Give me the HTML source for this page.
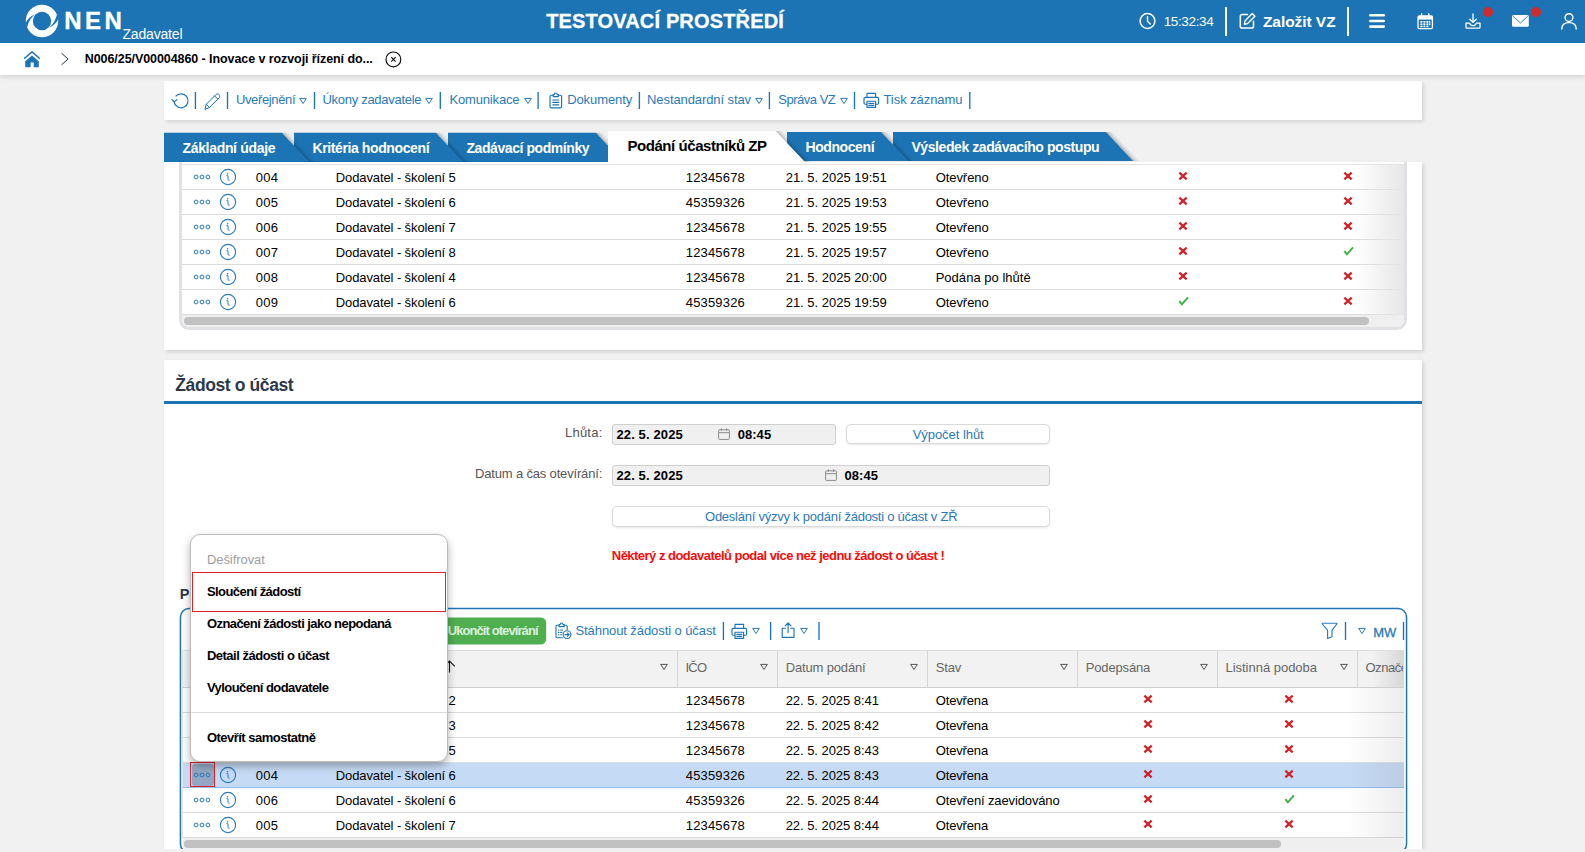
<!DOCTYPE html>
<html lang="cs"><head><meta charset="utf-8"><title>NEN - Zadavatel</title>
<style>
html,body{margin:0;padding:0}
body{width:1585px;height:852px;overflow:hidden;position:relative;background:#f1f1f1;font-family:"Liberation Sans", sans-serif;}
.t{position:absolute;white-space:pre;}
svg{overflow:visible}
</style></head><body>
<div style="position:absolute;left:0px;top:0px;width:1585px;height:43px;background:#1c74b4;"></div><svg style="position:absolute;left:0px;top:0px;" width="90" height="43" viewBox="0 0 90 43"><circle cx="42" cy="21" r="16.2" fill="#fff"/><circle cx="42" cy="21" r="9.2" fill="#1c74b4"/><path d="M25.30 23.80C27.20 19.20 30.60 15.90 35.40 14.30C31.60 16.90 28.40 21.20 26.90 28.60Z" fill="#1c74b4"/><path d="M58.70 18.20C56.80 22.80 53.40 26.10 48.60 27.70C52.40 25.10 55.60 20.80 57.10 13.40Z" fill="#1c74b4"/></svg><span class="t" style="left:64.24px;top:7px;font-size:24px;line-height:27px;color:#fff;font-weight:700;letter-spacing:3.424px;-webkit-text-stroke:0.35px #fff;">NEN</span><span class="t" style="left:122.44px;top:26px;font-size:14px;line-height:16px;color:#fff;letter-spacing:-0.171px;">Zadavatel</span><span class="t" style="left:546.20px;top:10px;font-size:20px;line-height:22px;color:#fff;font-weight:700;letter-spacing:0.153px;-webkit-text-stroke:0.3px #fff;">TESTOVACÍ PROSTŘEDÍ</span><svg style="position:absolute;left:1136px;top:9px;" width="24" height="24" viewBox="0 0 24 24"><circle cx="11.5" cy="12" r="7.4" fill="none" stroke="#fff" stroke-width="1.5"/><path d="M11.5 7.6V12.3L14.3 15" fill="none" stroke="#fff" stroke-width="1.4" stroke-linecap="round" stroke-linejoin="round"/></svg><span class="t" style="left:1163.66px;top:14px;font-size:13.5px;line-height:15px;color:#fff;letter-spacing:-0.355px;">15:32:34</span><div style="position:absolute;left:1225px;top:7px;width:2px;height:29px;background:#fff;"></div><svg style="position:absolute;left:1238px;top:11px;" width="20" height="20" viewBox="0 0 20 20"><path d="M9.5 3.5H4.2C3 3.5 2.3 4.2 2.3 5.4V15.2C2.3 16.4 3 17.1 4.2 17.1H13.6C14.8 17.1 15.5 16.4 15.5 15.2V10.2" fill="none" stroke="#fff" stroke-width="1.5" stroke-linecap="round"/><path d="M14.2 2.6L16.9 5.3L9.6 12.6L6.4 13.2L7 10Z" fill="none" stroke="#fff" stroke-width="1.4" stroke-linejoin="round"/></svg><span class="t" style="left:1262.98px;top:12.5px;font-size:15.5px;line-height:17px;color:#fff;font-weight:700;letter-spacing:-0.063px;">Založit VZ</span><div style="position:absolute;left:1347px;top:7px;width:2px;height:29px;background:#fff;"></div><svg style="position:absolute;left:1369px;top:13px;" width="16" height="16" viewBox="0 0 16 16"><rect x="0" y="1" width="16" height="2.6" rx="1.3" fill="#fff"/><rect x="0" y="6.7" width="16" height="2.6" rx="1.3" fill="#fff"/><rect x="0" y="12.3" width="16" height="2.6" rx="1.3" fill="#fff"/></svg><svg style="position:absolute;left:1417px;top:13px;" width="17" height="17" viewBox="0 0 17 17"><rect x="1" y="3" width="14.4" height="12.6" rx="1.3" fill="none" stroke="#fff" stroke-width="1.3"/><rect x="1" y="3" width="14.4" height="3.6" fill="#fff"/><path d="M4.6 0.6V4M11.8 0.6V4" stroke="#fff" stroke-width="1.3" stroke-linecap="round"/><g fill="#fff"><rect x="3.4" y="8" width="2" height="1.7"/><rect x="6.4" y="8" width="2" height="1.7"/><rect x="9.4" y="8" width="2" height="1.7"/><rect x="11.9" y="8" width="1.4" height="1.7"/><rect x="3.4" y="10.4" width="2" height="1.7"/><rect x="6.4" y="10.4" width="2" height="1.7"/><rect x="9.4" y="10.4" width="2" height="1.7"/><rect x="11.9" y="10.4" width="1.4" height="1.7"/><rect x="3.4" y="12.7" width="2" height="1.5"/><rect x="6.4" y="12.7" width="2" height="1.5"/><rect x="9.4" y="12.7" width="2" height="1.5"/></g></svg><svg style="position:absolute;left:1465px;top:13px;" width="16" height="17" viewBox="0 0 16 17"><path d="M8 0.8V9.2M4.8 6.2L8 9.4L11.2 6.2" fill="none" stroke="#fff" stroke-width="1.3" stroke-linecap="round" stroke-linejoin="round"/><path d="M1 10.2H4.6C5 11.8 6.3 12.6 8 12.6C9.7 12.6 11 11.8 11.4 10.2H15V14.2C15 14.8 14.6 15.2 14 15.2H2C1.4 15.2 1 14.8 1 14.2Z" fill="none" stroke="#fff" stroke-width="1.3" stroke-linejoin="round"/></svg><div style="position:absolute;left:1483px;top:7px;width:10px;height:10px;background:#cf2a2d;border-radius:50%;"></div><svg style="position:absolute;left:1512px;top:15px;" width="17" height="12" viewBox="0 0 17 12"><rect x="0" y="0" width="16.8" height="11.8" rx="1.6" fill="#fff"/><path d="M1 1.2L8.4 8L15.8 1.2" fill="none" stroke="#1c74b4" stroke-width="0.9"/></svg><div style="position:absolute;left:1531px;top:7px;width:10px;height:10px;background:#cf2a2d;border-radius:50%;"></div><svg style="position:absolute;left:1561px;top:13px;" width="16" height="17" viewBox="0 0 16 17"><circle cx="8" cy="4.6" r="3.9" fill="none" stroke="#fff" stroke-width="1.4"/><path d="M0.8 16C0.8 11.6 4 9.6 8 9.6C12 9.6 15.2 11.6 15.2 16" fill="none" stroke="#fff" stroke-width="1.4" stroke-linecap="round"/></svg><div style="position:absolute;left:0px;top:43px;width:1585px;height:32px;background:#fff;box-shadow:0 2px 5px rgba(0,0,0,.13);"></div><svg style="position:absolute;left:24px;top:50.5px;" width="16" height="17" viewBox="0 0 16 17"><path d="M0.6 7.2L8 0.9L15.4 7.2" fill="none" stroke="#1c74b4" stroke-width="1.5" stroke-linecap="round" stroke-linejoin="round"/><path d="M8 4.6L14.8 10.2V15.4C14.8 16 14.4 16.3 13.9 16.3H9.7V11.4H6.6V16.3H2.1C1.6 16.3 1.2 16 1.2 15.4V10.2Z" fill="#1c74b4"/></svg><svg style="position:absolute;left:60px;top:52px;" width="10" height="14" viewBox="0 0 10 14"><path d="M1.6 1.2L8 7L1.6 12.8" fill="none" stroke="#1f3550" stroke-width="1"/></svg><span class="t" style="left:84.80px;top:52px;font-size:12.5px;line-height:14px;color:#000;font-weight:700;letter-spacing:-0.078px;">N006/25/V00004860 - Inovace v rozvoji řízení do...</span><svg style="position:absolute;left:385px;top:50.5px;" width="17" height="17" viewBox="0 0 17 17"><circle cx="8.4" cy="8.4" r="7.4" fill="none" stroke="#111" stroke-width="1.2"/><path d="M6.2 6.2L10.6 10.6M10.6 6.2L6.2 10.6" stroke="#111" stroke-width="1.15"/></svg><div style="position:absolute;left:164px;top:81px;width:1258px;height:39px;background:#fff;box-shadow:1.5px 1.5px 4px rgba(0,0,0,.12);"></div><svg style="position:absolute;left:171px;top:91px;" width="20" height="20" viewBox="0 0 20 20"><path d="M4.6 5.4A7 7 0 1 1 3.1 10.6" fill="none" stroke="#1c74b4" stroke-width="1.2"/><path d="M0.9 8.4L3.2 10.9L6 8.6" fill="none" stroke="#1c74b4" stroke-width="1.2" stroke-linejoin="round" stroke-linecap="round"/></svg><svg style="position:absolute;left:193px;top:92px;" width="5" height="17" viewBox="0 0 5 17"><path d="M2.40 0V17" stroke="#1c74b4" stroke-width="1.35"/></svg><svg style="position:absolute;left:203.6px;top:92.6px;" width="17" height="17" viewBox="0 0 17 17"><g fill="none" stroke="#1c74b4" stroke-width="1.0" stroke-linejoin="round" stroke-linecap="round"><path d="M1 16L2.3 11.2L11.9 1.6C12.8 0.7 14.2 0.7 15.1 1.6C16 2.5 16 3.9 15.1 4.8L5.5 14.4Z"/><path d="M2.3 11.2L5.5 14.4"/><path d="M10.6 2.9L13.8 6.1"/></g></svg><svg style="position:absolute;left:225px;top:92px;" width="5" height="17" viewBox="0 0 5 17"><path d="M2.50 0V17" stroke="#1c74b4" stroke-width="1.35"/></svg><span class="t" style="left:235.98px;top:92px;font-size:13px;line-height:15px;color:#2a7ab9;letter-spacing:-0.371px;">Uveřejnění</span><svg style="position:absolute;left:298.2px;top:96px;" width="10" height="10" viewBox="0 0 10 10"><path d="M1.65 2.4H8.35L5 7.5Z" fill="none" stroke="#1c74b4" stroke-width="0.95" stroke-linejoin="round"/></svg><svg style="position:absolute;left:312px;top:92px;" width="5" height="17" viewBox="0 0 5 17"><path d="M2.50 0V17" stroke="#1c74b4" stroke-width="1.35"/></svg><span class="t" style="left:322.48px;top:92px;font-size:13px;line-height:15px;color:#2a7ab9;letter-spacing:-0.287px;">Úkony zadavatele</span><svg style="position:absolute;left:424px;top:96px;" width="10" height="10" viewBox="0 0 10 10"><path d="M1.65 2.4H8.35L5 7.5Z" fill="none" stroke="#1c74b4" stroke-width="0.95" stroke-linejoin="round"/></svg><svg style="position:absolute;left:438px;top:92px;" width="5" height="17" viewBox="0 0 5 17"><path d="M2.30 0V17" stroke="#1c74b4" stroke-width="1.35"/></svg><span class="t" style="left:449.48px;top:92px;font-size:13px;line-height:15px;color:#2a7ab9;letter-spacing:-0.167px;">Komunikace</span><svg style="position:absolute;left:523px;top:96px;" width="10" height="10" viewBox="0 0 10 10"><path d="M1.65 2.4H8.35L5 7.5Z" fill="none" stroke="#1c74b4" stroke-width="0.95" stroke-linejoin="round"/></svg><svg style="position:absolute;left:536px;top:92px;" width="5" height="17" viewBox="0 0 5 17"><path d="M2.10 0V17" stroke="#1c74b4" stroke-width="1.35"/></svg><svg style="position:absolute;left:548.6px;top:92.2px;" width="14" height="17" viewBox="0 0 14 17"><g fill="none" stroke="#1c74b4" stroke-width="1.15" stroke-linejoin="round" stroke-linecap="round"><path d="M4.2 3.2H2.2C1.5 3.2 1 3.7 1 4.4V14.6C1 15.3 1.5 15.8 2.2 15.8H11.4C12.1 15.8 12.6 15.3 12.6 14.6V4.4C12.6 3.7 12.1 3.2 11.4 3.2H9.4"/><path d="M4.2 4.6V2.6H5.4C5.4 1.6 6 1 6.8 1C7.6 1 8.2 1.6 8.2 2.6H9.4V4.6Z"/><path d="M3.8 8H9.8M3.8 10.4H9.8M3.8 12.8H9.8"/></g></svg><span class="t" style="left:567.18px;top:92px;font-size:13px;line-height:15px;color:#2a7ab9;letter-spacing:-0.089px;">Dokumenty</span><svg style="position:absolute;left:637px;top:92px;" width="5" height="17" viewBox="0 0 5 17"><path d="M2.40 0V17" stroke="#1c74b4" stroke-width="1.35"/></svg><span class="t" style="left:647.08px;top:92px;font-size:13px;line-height:15px;color:#2a7ab9;letter-spacing:-0.092px;">Nestandardní stav</span><svg style="position:absolute;left:754px;top:96px;" width="10" height="10" viewBox="0 0 10 10"><path d="M1.65 2.4H8.35L5 7.5Z" fill="none" stroke="#1c74b4" stroke-width="0.95" stroke-linejoin="round"/></svg><svg style="position:absolute;left:767px;top:92px;" width="5" height="17" viewBox="0 0 5 17"><path d="M2.40 0V17" stroke="#1c74b4" stroke-width="1.35"/></svg><span class="t" style="left:778.28px;top:92px;font-size:13px;line-height:15px;color:#2a7ab9;letter-spacing:-0.485px;">Správa VZ</span><svg style="position:absolute;left:838.5px;top:96px;" width="10" height="10" viewBox="0 0 10 10"><path d="M1.65 2.4H8.35L5 7.5Z" fill="none" stroke="#1c74b4" stroke-width="0.95" stroke-linejoin="round"/></svg><svg style="position:absolute;left:852px;top:92px;" width="5" height="17" viewBox="0 0 5 17"><path d="M2.50 0V17" stroke="#1c74b4" stroke-width="1.35"/></svg><svg style="position:absolute;left:863px;top:92.4px;" width="17" height="17" viewBox="0 0 17 17"><g fill="none" stroke="#1c74b4" stroke-width="1.15" stroke-linejoin="round" stroke-linecap="round"><path d="M4 5.4V1.4H12.6V5.4"/><path d="M4 12.2H2.2C1.5 12.2 1 11.7 1 11V6.6C1 5.9 1.5 5.4 2.2 5.4H14.4C15.1 5.4 15.6 5.9 15.6 6.6V11C15.6 11.7 15.1 12.2 14.4 12.2H12.6"/><path d="M4 9.2H12.6V15.4H4Z"/><path d="M5.8 11.4H10.8M5.8 13.3H10.8"/></g></svg><span class="t" style="left:883.48px;top:92px;font-size:13px;line-height:15px;color:#2a7ab9;letter-spacing:-0.062px;">Tisk záznamu</span><svg style="position:absolute;left:967px;top:92px;" width="5" height="17" viewBox="0 0 5 17"><path d="M2.80 0V17" stroke="#1c74b4" stroke-width="1.35"/></svg><svg style="position:absolute;left:160px;top:126px;" width="1000" height="36" viewBox="0 0 1000 36"><linearGradient id="g5" gradientUnits="userSpaceOnUse" x1="946.00" y1="5.90" x2="949.75" y2="2.41"><stop offset="0" stop-color="#000" stop-opacity=".24"/><stop offset=".5" stop-color="#000" stop-opacity=".09"/><stop offset="1" stop-color="#000" stop-opacity="0"/></linearGradient><polygon points="946.00,5.90 953.00,5.90 980.13,35.00 973.13,35.00" fill="url(#g5)"/><polygon points="733.00,5.90 946.00,5.90 973.13,35.00 733.00,35.00" fill="#1c74b4"/><linearGradient id="g4" gradientUnits="userSpaceOnUse" x1="721.20" y1="5.90" x2="724.95" y2="2.41"><stop offset="0" stop-color="#000" stop-opacity=".24"/><stop offset=".5" stop-color="#000" stop-opacity=".09"/><stop offset="1" stop-color="#000" stop-opacity="0"/></linearGradient><polygon points="721.20,5.90 728.20,5.90 755.33,35.00 748.33,35.00" fill="url(#g4)"/><polygon points="627.00,5.90 721.20,5.90 748.33,35.00 627.00,35.00" fill="#1c74b4"/><linearGradient id="g2" gradientUnits="userSpaceOnUse" x1="436.00" y1="6.80" x2="439.75" y2="3.31"><stop offset="0" stop-color="#000" stop-opacity=".24"/><stop offset=".5" stop-color="#000" stop-opacity=".09"/><stop offset="1" stop-color="#000" stop-opacity="0"/></linearGradient><polygon points="436.00,6.80 443.00,6.80 470.22,36.00 463.22,36.00" fill="url(#g2)"/><polygon points="288.00,6.80 436.00,6.80 463.22,36.00 288.00,36.00" fill="#1c74b4"/><linearGradient id="g1" gradientUnits="userSpaceOnUse" x1="276.00" y1="6.80" x2="279.75" y2="3.31"><stop offset="0" stop-color="#000" stop-opacity=".24"/><stop offset=".5" stop-color="#000" stop-opacity=".09"/><stop offset="1" stop-color="#000" stop-opacity="0"/></linearGradient><polygon points="276.00,6.80 283.00,6.80 310.22,36.00 303.22,36.00" fill="url(#g1)"/><polygon points="134.00,6.80 276.00,6.80 303.22,36.00 134.00,36.00" fill="#1c74b4"/><linearGradient id="g0" gradientUnits="userSpaceOnUse" x1="122.00" y1="6.80" x2="125.75" y2="3.31"><stop offset="0" stop-color="#000" stop-opacity=".24"/><stop offset=".5" stop-color="#000" stop-opacity=".09"/><stop offset="1" stop-color="#000" stop-opacity="0"/></linearGradient><polygon points="122.00,6.80 129.00,6.80 156.22,36.00 149.22,36.00" fill="url(#g0)"/><polygon points="4.00,6.80 122.00,6.80 149.22,36.00 4.00,36.00" fill="#1c74b4"/><linearGradient id="g3" gradientUnits="userSpaceOnUse" x1="615.60" y1="5.00" x2="619.29" y2="1.50"><stop offset="0" stop-color="#000" stop-opacity=".24"/><stop offset=".5" stop-color="#000" stop-opacity=".09"/><stop offset="1" stop-color="#000" stop-opacity="0"/></linearGradient><polygon points="615.60,5.00 622.60,5.00 652.00,36.00 645.00,36.00" fill="url(#g3)"/><polygon points="448.00,5.00 615.60,5.00 645.00,36.00 448.00,36.00" fill="#fff"/></svg><span class="t" style="left:182.44px;top:140px;font-size:14px;line-height:16px;color:#fff;font-weight:700;letter-spacing:-0.318px;">Základní údaje</span><span class="t" style="left:312.44px;top:140px;font-size:14px;line-height:16px;color:#fff;font-weight:700;letter-spacing:-0.386px;">Kritéria hodnocení</span><span class="t" style="left:466.44px;top:140px;font-size:14px;line-height:16px;color:#fff;font-weight:700;letter-spacing:-0.426px;">Zadávací podmínky</span><span class="t" style="left:627.40px;top:136.5px;font-size:15px;line-height:17px;color:#000;font-weight:700;letter-spacing:-0.435px;">Podání účastníků ZP</span><span class="t" style="left:805.44px;top:139.3px;font-size:14px;line-height:16px;color:#fff;font-weight:700;letter-spacing:-0.403px;">Hodnocení</span><span class="t" style="left:911.44px;top:139.3px;font-size:14px;line-height:16px;color:#fff;font-weight:700;letter-spacing:-0.425px;">Výsledek zadávacího postupu</span><div style="position:absolute;left:164px;top:162px;width:1258px;height:188px;background:#fff;box-shadow:2px 2px 4px rgba(0,0,0,.13);"></div><div style="position:absolute;left:179px;top:162px;width:1222px;height:165px;border:3px solid #dfe1e4;border-top:none;border-radius:0 0 10px 10px;background:#fff;"></div><div style="position:absolute;left:182px;top:164px;width:1222px;height:1px;background:#e4e4e4;"></div><div style="position:absolute;left:182px;top:189px;width:1222px;height:1px;background:#dcdcdc;"></div><svg style="position:absolute;left:192px;top:172.7px;" width="20" height="8" viewBox="0 0 20 8"><circle cx="4.1" cy="4" r="1.9" fill="none" stroke="#2a7ab9" stroke-width="1"/><circle cx="10" cy="4" r="1.9" fill="none" stroke="#2a7ab9" stroke-width="1"/><circle cx="15.9" cy="4" r="1.9" fill="none" stroke="#2a7ab9" stroke-width="1"/></svg><svg style="position:absolute;left:219.2px;top:167.7px;" width="18" height="18" viewBox="0 0 18 18"><circle cx="9" cy="9" r="7.6" fill="none" stroke="#2a7ab9" stroke-width="1.15"/><circle cx="8.6" cy="5.8" r="0.8" fill="#2a7ab9"/><path d="M7.8 7.7H9V11.5C9 12.1 9.5 12.35 10.3 12.2" fill="none" stroke="#2a7ab9" stroke-width="0.95" stroke-linecap="round" stroke-linejoin="round"/></svg><span class="t" style="left:255.78px;top:170px;font-size:13px;line-height:15px;color:#000;letter-spacing:0.318px;">004</span><span class="t" style="left:335.78px;top:170px;font-size:13px;line-height:15px;color:#000;letter-spacing:-0.104px;">Dodavatel - školení 5</span><span class="t" style="left:685.78px;top:170px;font-size:13px;line-height:15px;color:#000;letter-spacing:0.171px;">12345678</span><span class="t" style="left:785.68px;top:170px;font-size:13px;line-height:15px;color:#000;letter-spacing:-0.010px;">21. 5. 2025 19:51</span><span class="t" style="left:935.68px;top:170px;font-size:13px;line-height:15px;color:#000;letter-spacing:-0.063px;">Otevřeno</span><svg style="position:absolute;left:1177.3px;top:170.1px;" width="12" height="12" viewBox="0 0 12 12"><path d="M2.35 2.65L9.65 9.35M9.65 2.65L2.35 9.35" stroke="#cf2128" stroke-width="2.2"/></svg><svg style="position:absolute;left:1342.4px;top:170.1px;" width="12" height="12" viewBox="0 0 12 12"><path d="M2.35 2.65L9.65 9.35M9.65 2.65L2.35 9.35" stroke="#cf2128" stroke-width="2.2"/></svg><div style="position:absolute;left:182px;top:214px;width:1222px;height:1px;background:#dcdcdc;"></div><svg style="position:absolute;left:192px;top:197.7px;" width="20" height="8" viewBox="0 0 20 8"><circle cx="4.1" cy="4" r="1.9" fill="none" stroke="#2a7ab9" stroke-width="1"/><circle cx="10" cy="4" r="1.9" fill="none" stroke="#2a7ab9" stroke-width="1"/><circle cx="15.9" cy="4" r="1.9" fill="none" stroke="#2a7ab9" stroke-width="1"/></svg><svg style="position:absolute;left:219.2px;top:192.7px;" width="18" height="18" viewBox="0 0 18 18"><circle cx="9" cy="9" r="7.6" fill="none" stroke="#2a7ab9" stroke-width="1.15"/><circle cx="8.6" cy="5.8" r="0.8" fill="#2a7ab9"/><path d="M7.8 7.7H9V11.5C9 12.1 9.5 12.35 10.3 12.2" fill="none" stroke="#2a7ab9" stroke-width="0.95" stroke-linecap="round" stroke-linejoin="round"/></svg><span class="t" style="left:255.78px;top:195px;font-size:13px;line-height:15px;color:#000;letter-spacing:0.318px;">005</span><span class="t" style="left:335.78px;top:195px;font-size:13px;line-height:15px;color:#000;letter-spacing:-0.104px;">Dodavatel - školení 6</span><span class="t" style="left:685.78px;top:195px;font-size:13px;line-height:15px;color:#000;letter-spacing:0.171px;">45359326</span><span class="t" style="left:785.68px;top:195px;font-size:13px;line-height:15px;color:#000;letter-spacing:-0.010px;">21. 5. 2025 19:53</span><span class="t" style="left:935.68px;top:195px;font-size:13px;line-height:15px;color:#000;letter-spacing:-0.063px;">Otevřeno</span><svg style="position:absolute;left:1177.3px;top:195.1px;" width="12" height="12" viewBox="0 0 12 12"><path d="M2.35 2.65L9.65 9.35M9.65 2.65L2.35 9.35" stroke="#cf2128" stroke-width="2.2"/></svg><svg style="position:absolute;left:1342.4px;top:195.1px;" width="12" height="12" viewBox="0 0 12 12"><path d="M2.35 2.65L9.65 9.35M9.65 2.65L2.35 9.35" stroke="#cf2128" stroke-width="2.2"/></svg><div style="position:absolute;left:182px;top:239px;width:1222px;height:1px;background:#dcdcdc;"></div><svg style="position:absolute;left:192px;top:222.7px;" width="20" height="8" viewBox="0 0 20 8"><circle cx="4.1" cy="4" r="1.9" fill="none" stroke="#2a7ab9" stroke-width="1"/><circle cx="10" cy="4" r="1.9" fill="none" stroke="#2a7ab9" stroke-width="1"/><circle cx="15.9" cy="4" r="1.9" fill="none" stroke="#2a7ab9" stroke-width="1"/></svg><svg style="position:absolute;left:219.2px;top:217.7px;" width="18" height="18" viewBox="0 0 18 18"><circle cx="9" cy="9" r="7.6" fill="none" stroke="#2a7ab9" stroke-width="1.15"/><circle cx="8.6" cy="5.8" r="0.8" fill="#2a7ab9"/><path d="M7.8 7.7H9V11.5C9 12.1 9.5 12.35 10.3 12.2" fill="none" stroke="#2a7ab9" stroke-width="0.95" stroke-linecap="round" stroke-linejoin="round"/></svg><span class="t" style="left:255.78px;top:220px;font-size:13px;line-height:15px;color:#000;letter-spacing:0.318px;">006</span><span class="t" style="left:335.78px;top:220px;font-size:13px;line-height:15px;color:#000;letter-spacing:-0.104px;">Dodavatel - školení 7</span><span class="t" style="left:685.78px;top:220px;font-size:13px;line-height:15px;color:#000;letter-spacing:0.171px;">12345678</span><span class="t" style="left:785.68px;top:220px;font-size:13px;line-height:15px;color:#000;letter-spacing:-0.010px;">21. 5. 2025 19:55</span><span class="t" style="left:935.68px;top:220px;font-size:13px;line-height:15px;color:#000;letter-spacing:-0.063px;">Otevřeno</span><svg style="position:absolute;left:1177.3px;top:220.1px;" width="12" height="12" viewBox="0 0 12 12"><path d="M2.35 2.65L9.65 9.35M9.65 2.65L2.35 9.35" stroke="#cf2128" stroke-width="2.2"/></svg><svg style="position:absolute;left:1342.4px;top:220.1px;" width="12" height="12" viewBox="0 0 12 12"><path d="M2.35 2.65L9.65 9.35M9.65 2.65L2.35 9.35" stroke="#cf2128" stroke-width="2.2"/></svg><div style="position:absolute;left:182px;top:264px;width:1222px;height:1px;background:#dcdcdc;"></div><svg style="position:absolute;left:192px;top:247.7px;" width="20" height="8" viewBox="0 0 20 8"><circle cx="4.1" cy="4" r="1.9" fill="none" stroke="#2a7ab9" stroke-width="1"/><circle cx="10" cy="4" r="1.9" fill="none" stroke="#2a7ab9" stroke-width="1"/><circle cx="15.9" cy="4" r="1.9" fill="none" stroke="#2a7ab9" stroke-width="1"/></svg><svg style="position:absolute;left:219.2px;top:242.7px;" width="18" height="18" viewBox="0 0 18 18"><circle cx="9" cy="9" r="7.6" fill="none" stroke="#2a7ab9" stroke-width="1.15"/><circle cx="8.6" cy="5.8" r="0.8" fill="#2a7ab9"/><path d="M7.8 7.7H9V11.5C9 12.1 9.5 12.35 10.3 12.2" fill="none" stroke="#2a7ab9" stroke-width="0.95" stroke-linecap="round" stroke-linejoin="round"/></svg><span class="t" style="left:255.78px;top:245px;font-size:13px;line-height:15px;color:#000;letter-spacing:0.318px;">007</span><span class="t" style="left:335.78px;top:245px;font-size:13px;line-height:15px;color:#000;letter-spacing:-0.104px;">Dodavatel - školení 8</span><span class="t" style="left:685.78px;top:245px;font-size:13px;line-height:15px;color:#000;letter-spacing:0.171px;">12345678</span><span class="t" style="left:785.68px;top:245px;font-size:13px;line-height:15px;color:#000;letter-spacing:-0.010px;">21. 5. 2025 19:57</span><span class="t" style="left:935.68px;top:245px;font-size:13px;line-height:15px;color:#000;letter-spacing:-0.063px;">Otevřeno</span><svg style="position:absolute;left:1177.3px;top:245.1px;" width="12" height="12" viewBox="0 0 12 12"><path d="M2.35 2.65L9.65 9.35M9.65 2.65L2.35 9.35" stroke="#cf2128" stroke-width="2.2"/></svg><svg style="position:absolute;left:1341.4px;top:245.1px;" width="14" height="12" viewBox="0 0 14 12"><path d="M3.3 6.1L5.9 9.3L12 2.4" fill="none" stroke="#3cb144" stroke-width="2"/></svg><div style="position:absolute;left:182px;top:289px;width:1222px;height:1px;background:#dcdcdc;"></div><svg style="position:absolute;left:192px;top:272.7px;" width="20" height="8" viewBox="0 0 20 8"><circle cx="4.1" cy="4" r="1.9" fill="none" stroke="#2a7ab9" stroke-width="1"/><circle cx="10" cy="4" r="1.9" fill="none" stroke="#2a7ab9" stroke-width="1"/><circle cx="15.9" cy="4" r="1.9" fill="none" stroke="#2a7ab9" stroke-width="1"/></svg><svg style="position:absolute;left:219.2px;top:267.7px;" width="18" height="18" viewBox="0 0 18 18"><circle cx="9" cy="9" r="7.6" fill="none" stroke="#2a7ab9" stroke-width="1.15"/><circle cx="8.6" cy="5.8" r="0.8" fill="#2a7ab9"/><path d="M7.8 7.7H9V11.5C9 12.1 9.5 12.35 10.3 12.2" fill="none" stroke="#2a7ab9" stroke-width="0.95" stroke-linecap="round" stroke-linejoin="round"/></svg><span class="t" style="left:255.78px;top:270px;font-size:13px;line-height:15px;color:#000;letter-spacing:0.318px;">008</span><span class="t" style="left:335.78px;top:270px;font-size:13px;line-height:15px;color:#000;letter-spacing:-0.104px;">Dodavatel - školení 4</span><span class="t" style="left:685.78px;top:270px;font-size:13px;line-height:15px;color:#000;letter-spacing:0.171px;">12345678</span><span class="t" style="left:785.68px;top:270px;font-size:13px;line-height:15px;color:#000;letter-spacing:-0.010px;">21. 5. 2025 20:00</span><span class="t" style="left:935.68px;top:270px;font-size:13px;line-height:15px;color:#000;letter-spacing:0.024px;">Podána po lhůtě</span><svg style="position:absolute;left:1177.3px;top:270.09999999999997px;" width="12" height="12" viewBox="0 0 12 12"><path d="M2.35 2.65L9.65 9.35M9.65 2.65L2.35 9.35" stroke="#cf2128" stroke-width="2.2"/></svg><svg style="position:absolute;left:1342.4px;top:270.09999999999997px;" width="12" height="12" viewBox="0 0 12 12"><path d="M2.35 2.65L9.65 9.35M9.65 2.65L2.35 9.35" stroke="#cf2128" stroke-width="2.2"/></svg><div style="position:absolute;left:182px;top:314px;width:1222px;height:1px;background:#dcdcdc;"></div><svg style="position:absolute;left:192px;top:297.7px;" width="20" height="8" viewBox="0 0 20 8"><circle cx="4.1" cy="4" r="1.9" fill="none" stroke="#2a7ab9" stroke-width="1"/><circle cx="10" cy="4" r="1.9" fill="none" stroke="#2a7ab9" stroke-width="1"/><circle cx="15.9" cy="4" r="1.9" fill="none" stroke="#2a7ab9" stroke-width="1"/></svg><svg style="position:absolute;left:219.2px;top:292.7px;" width="18" height="18" viewBox="0 0 18 18"><circle cx="9" cy="9" r="7.6" fill="none" stroke="#2a7ab9" stroke-width="1.15"/><circle cx="8.6" cy="5.8" r="0.8" fill="#2a7ab9"/><path d="M7.8 7.7H9V11.5C9 12.1 9.5 12.35 10.3 12.2" fill="none" stroke="#2a7ab9" stroke-width="0.95" stroke-linecap="round" stroke-linejoin="round"/></svg><span class="t" style="left:255.78px;top:295px;font-size:13px;line-height:15px;color:#000;letter-spacing:0.318px;">009</span><span class="t" style="left:335.78px;top:295px;font-size:13px;line-height:15px;color:#000;letter-spacing:-0.104px;">Dodavatel - školení 6</span><span class="t" style="left:685.78px;top:295px;font-size:13px;line-height:15px;color:#000;letter-spacing:0.171px;">45359326</span><span class="t" style="left:785.68px;top:295px;font-size:13px;line-height:15px;color:#000;letter-spacing:-0.010px;">21. 5. 2025 19:59</span><span class="t" style="left:935.68px;top:295px;font-size:13px;line-height:15px;color:#000;letter-spacing:-0.063px;">Otevřeno</span><svg style="position:absolute;left:1176.3px;top:295.09999999999997px;" width="14" height="12" viewBox="0 0 14 12"><path d="M3.3 6.1L5.9 9.3L12 2.4" fill="none" stroke="#3cb144" stroke-width="2"/></svg><svg style="position:absolute;left:1342.4px;top:295.09999999999997px;" width="12" height="12" viewBox="0 0 12 12"><path d="M2.35 2.65L9.65 9.35M9.65 2.65L2.35 9.35" stroke="#cf2128" stroke-width="2.2"/></svg><div style="position:absolute;left:1356px;top:165px;width:48px;height:150px;background:linear-gradient(90deg,rgba(232,232,232,0),rgba(230,230,230,1));"></div><div style="position:absolute;left:182px;top:315px;width:1222px;height:12px;background:#efefef;border-radius:0 0 7px 7px;"></div><div style="position:absolute;left:184px;top:317.2px;width:1185px;height:7.7px;background:#c1c1c1;border-radius:4px;"></div><div style="position:absolute;left:164px;top:360px;width:1258px;height:489px;background:#fff;box-shadow:2px 2px 4px rgba(0,0,0,.13);"></div><span class="t" style="left:175.30px;top:374.5px;font-size:17.5px;line-height:20px;color:#2b3a4a;font-weight:700;letter-spacing:-0.392px;">Žádost o účast</span><div style="position:absolute;left:164px;top:401px;width:1258px;height:3px;background:#1c74b4;"></div><span class="t" style="left:564.98px;top:425px;font-size:13px;line-height:15px;color:#555;letter-spacing:0.237px;">Lhůta:</span><span class="t" style="left:474.98px;top:466px;font-size:13px;line-height:15px;color:#555;letter-spacing:-0.164px;">Datum a čas otevírání:</span><div style="position:absolute;left:612px;top:424px;width:224px;height:21px;background:#f0f0f0;border:1px solid #cfcfcf;border-radius:3px;box-sizing:border-box;"></div><span class="t" style="left:616.48px;top:427px;font-size:13px;line-height:15px;color:#000;font-weight:700;letter-spacing:0.118px;">22. 5. 2025</span><svg style="position:absolute;left:718px;top:427.6px;" width="12" height="12" viewBox="0 0 12 12"><g fill="none" stroke="#8a8a8a" stroke-width="1"><rect x="0.6" y="1.8" width="10.8" height="9.6" rx="0.7"/><path d="M0.6 4.7H11.4M3.4 0.4V2.8M8.6 0.4V2.8"/></g></svg><span class="t" style="left:737.68px;top:427px;font-size:13px;line-height:15px;color:#000;font-weight:700;letter-spacing:0.047px;">08:45</span><div style="position:absolute;left:846px;top:424px;width:204px;height:19.6px;background:#fff;border:1px solid #dadada;border-radius:5px;box-sizing:border-box;box-shadow:0 1px 2px rgba(0,0,0,.10);"></div><span class="t" style="left:912.68px;top:427px;font-size:13px;line-height:15px;color:#2a7ab9;letter-spacing:-0.046px;">Výpočet lhůt</span><div style="position:absolute;left:612px;top:465px;width:438px;height:21px;background:#f0f0f0;border:1px solid #cfcfcf;border-radius:3px;box-sizing:border-box;"></div><span class="t" style="left:616.48px;top:468px;font-size:13px;line-height:15px;color:#000;font-weight:700;letter-spacing:0.118px;">22. 5. 2025</span><svg style="position:absolute;left:825px;top:468.6px;" width="12" height="12" viewBox="0 0 12 12"><g fill="none" stroke="#8a8a8a" stroke-width="1"><rect x="0.6" y="1.8" width="10.8" height="9.6" rx="0.7"/><path d="M0.6 4.7H11.4M3.4 0.4V2.8M8.6 0.4V2.8"/></g></svg><span class="t" style="left:844.48px;top:468px;font-size:13px;line-height:15px;color:#000;font-weight:700;letter-spacing:0.047px;">08:45</span><div style="position:absolute;left:612px;top:506px;width:438px;height:21px;background:#fff;border:1px solid #dadada;border-radius:5px;box-sizing:border-box;box-shadow:0 1px 2px rgba(0,0,0,.10);"></div><span class="t" style="left:705.03px;top:509px;font-size:13px;line-height:15px;color:#2a7ab9;letter-spacing:-0.244px;">Odeslání výzvy k podání žádosti o účast v ZŘ</span><span class="t" style="left:611.78px;top:548px;font-size:13px;line-height:15px;color:#fb0a0a;font-weight:700;letter-spacing:-0.520px;">Některý z dodavatelů podal více než jednu žádost o účast !</span><span class="t" style="left:179.80px;top:585.6px;font-size:14.5px;line-height:16px;color:#2b3a4a;font-weight:700;">Podané žádosti o účast</span><svg style="position:absolute;left:170px;top:600px;" width="1250" height="252" viewBox="0 0 1250 252"><rect x="10.45" y="8.6" width="1226.1" height="244" rx="8.5" fill="#fff" stroke="#1c74b4" stroke-width="1.5"/></svg><div style="position:absolute;left:181.2px;top:650px;width:1.6px;height:188px;background:#e3e3e3;"></div><svg style="position:absolute;left:440px;top:610px;" width="110" height="40" viewBox="0 0 110 40"><rect x="0" y="7.4" width="106.2" height="27.1" rx="5.5" fill="#4fae50"/></svg><span class="t" style="left:447.68px;top:623.3px;font-size:13px;line-height:15px;color:#dbf0db;font-weight:700;letter-spacing:-0.914px;">Ukončit otevírání</span><svg style="position:absolute;left:555.3px;top:622.4px;" width="17" height="17" viewBox="0 0 17 17"><g fill="none" stroke="#1c74b4" stroke-width="1.1" stroke-linejoin="round" stroke-linecap="round"><path d="M4 3.2H2.1C1.5 3.2 1 3.7 1 4.3V14.7C1 15.3 1.5 15.8 2.1 15.8H7.4"/><path d="M9.2 3.2H11.1C11.7 3.2 12.2 3.7 12.2 4.3V7.6"/><path d="M4 4.6V2.6H5.2C5.2 1.6 5.8 1 6.6 1C7.4 1 8 1.6 8 2.6H9.2V4.6Z"/><path d="M3.4 8H4M3.4 10.4H4M3.4 12.8H4M5.6 8H7.6M5.6 10.4H6.8M5.6 12.8H6.6"/><circle cx="12" cy="12.6" r="3.9"/><path d="M9.9 12.6H13.9M12.5 11L14.1 12.6L12.5 14.2"/></g></svg><span class="t" style="left:575.48px;top:623.3px;font-size:13px;line-height:15px;color:#2a7ab9;letter-spacing:-0.084px;">Stáhnout žádosti o účast</span><svg style="position:absolute;left:721px;top:622px;" width="5" height="18" viewBox="0 0 5 18"><path d="M2.40 0V18" stroke="#1c74b4" stroke-width="1.35"/></svg><svg style="position:absolute;left:731px;top:622.6px;" width="17" height="17" viewBox="0 0 17 17"><g fill="none" stroke="#1c74b4" stroke-width="1.15" stroke-linejoin="round" stroke-linecap="round"><path d="M4 5.4V1.4H12.6V5.4"/><path d="M4 12.2H2.2C1.5 12.2 1 11.7 1 11V6.6C1 5.9 1.5 5.4 2.2 5.4H14.4C15.1 5.4 15.6 5.9 15.6 6.6V11C15.6 11.7 15.1 12.2 14.4 12.2H12.6"/><path d="M4 9.2H12.6V15.4H4Z"/><path d="M5.8 11.4H10.8M5.8 13.3H10.8"/></g></svg><svg style="position:absolute;left:751.3px;top:626px;" width="10" height="10" viewBox="0 0 10 10"><path d="M1.65 2.4H8.35L5 7.5Z" fill="none" stroke="#1c74b4" stroke-width="0.95" stroke-linejoin="round"/></svg><svg style="position:absolute;left:768px;top:622px;" width="5" height="18" viewBox="0 0 5 18"><path d="M2.60 0V18" stroke="#1c74b4" stroke-width="1.35"/></svg><svg style="position:absolute;left:781px;top:622.2px;" width="15" height="17" viewBox="0 0 15 17"><g fill="none" stroke="#1c74b4" stroke-width="1.15" stroke-linejoin="round" stroke-linecap="round"><path d="M4.4 6.2H1.2V15.4H13V6.2H9.8"/><path d="M7.1 10.4V1M4.2 3.8L7.1 0.9L10 3.8"/></g></svg><svg style="position:absolute;left:799px;top:626px;" width="10" height="10" viewBox="0 0 10 10"><path d="M1.65 2.4H8.35L5 7.5Z" fill="none" stroke="#1c74b4" stroke-width="0.95" stroke-linejoin="round"/></svg><svg style="position:absolute;left:817px;top:622px;" width="5" height="18" viewBox="0 0 5 18"><path d="M2.00 0V18" stroke="#1c74b4" stroke-width="1.35"/></svg><svg style="position:absolute;left:1321px;top:622px;" width="18" height="18" viewBox="0 0 18 18"><path d="M1.4 2C1 1.5 1.3 1.2 2 1.2H15.2C15.9 1.2 16.2 1.5 15.8 2L11 8.4V14.7L6.6 16.5V8.4Z" fill="none" stroke="#2a7ab9" stroke-width="1.15" stroke-linejoin="round"/></svg><svg style="position:absolute;left:1343px;top:622px;" width="5" height="18" viewBox="0 0 5 18"><path d="M2.50 0V18" stroke="#1c74b4" stroke-width="1.35"/></svg><svg style="position:absolute;left:1356.5px;top:626.2px;" width="10" height="10" viewBox="0 0 10 10"><path d="M1.65 2.4H8.35L5 7.5Z" fill="none" stroke="#1c74b4" stroke-width="0.95" stroke-linejoin="round"/></svg><span class="t" style="left:1373.28px;top:625px;font-size:13px;line-height:15px;color:#2a7ab9;letter-spacing:-0.069px;-webkit-text-stroke:.3px #2a7ab9;">MW</span><svg style="position:absolute;left:1401px;top:622px;" width="5" height="18" viewBox="0 0 5 18"><path d="M2.50 0V18" stroke="#1c74b4" stroke-width="1.35"/></svg><div style="position:absolute;left:182.8px;top:650px;width:1221.3px;height:38px;background:#f2f2f2;border-top:1px solid #dedede;border-bottom:1px solid #cfcfcf;box-sizing:border-box;"></div><div style="position:absolute;left:246.0px;top:651px;width:1px;height:36px;background:#d4d4d4;"></div><svg style="position:absolute;left:227.7px;top:662.2px;" width="10" height="10" viewBox="0 0 10 10"><path d="M1.65 2.4H8.35L5 7.5Z" fill="none" stroke="#555" stroke-width="1" stroke-linejoin="round"/></svg><div style="position:absolute;left:326.0px;top:651px;width:1px;height:36px;background:#d4d4d4;"></div><svg style="position:absolute;left:307.7px;top:662.2px;" width="10" height="10" viewBox="0 0 10 10"><path d="M1.65 2.4H8.35L5 7.5Z" fill="none" stroke="#555" stroke-width="1" stroke-linejoin="round"/></svg><div style="position:absolute;left:677.0px;top:651px;width:1px;height:36px;background:#d4d4d4;"></div><svg style="position:absolute;left:658.7px;top:662.2px;" width="10" height="10" viewBox="0 0 10 10"><path d="M1.65 2.4H8.35L5 7.5Z" fill="none" stroke="#555" stroke-width="1" stroke-linejoin="round"/></svg><div style="position:absolute;left:777.0px;top:651px;width:1px;height:36px;background:#d4d4d4;"></div><svg style="position:absolute;left:758.7px;top:662.2px;" width="10" height="10" viewBox="0 0 10 10"><path d="M1.65 2.4H8.35L5 7.5Z" fill="none" stroke="#555" stroke-width="1" stroke-linejoin="round"/></svg><div style="position:absolute;left:927.0px;top:651px;width:1px;height:36px;background:#d4d4d4;"></div><svg style="position:absolute;left:908.7px;top:662.2px;" width="10" height="10" viewBox="0 0 10 10"><path d="M1.65 2.4H8.35L5 7.5Z" fill="none" stroke="#555" stroke-width="1" stroke-linejoin="round"/></svg><div style="position:absolute;left:1077.0px;top:651px;width:1px;height:36px;background:#d4d4d4;"></div><svg style="position:absolute;left:1058.7px;top:662.2px;" width="10" height="10" viewBox="0 0 10 10"><path d="M1.65 2.4H8.35L5 7.5Z" fill="none" stroke="#555" stroke-width="1" stroke-linejoin="round"/></svg><div style="position:absolute;left:1217.0px;top:651px;width:1px;height:36px;background:#d4d4d4;"></div><svg style="position:absolute;left:1198.7px;top:662.2px;" width="10" height="10" viewBox="0 0 10 10"><path d="M1.65 2.4H8.35L5 7.5Z" fill="none" stroke="#555" stroke-width="1" stroke-linejoin="round"/></svg><div style="position:absolute;left:1357.0px;top:651px;width:1px;height:36px;background:#d4d4d4;"></div><svg style="position:absolute;left:1338.7px;top:662.2px;" width="10" height="10" viewBox="0 0 10 10"><path d="M1.65 2.4H8.35L5 7.5Z" fill="none" stroke="#555" stroke-width="1" stroke-linejoin="round"/></svg><svg style="position:absolute;left:444px;top:659px;" width="12" height="16" viewBox="0 0 12 16"><path d="M5.5 13.6V2.2M0.2 7.4L5.5 2.1L10.8 7.4" fill="none" stroke="#111" stroke-width="1.05"/></svg><span class="t" style="left:685.48px;top:659.5px;font-size:13px;line-height:15px;color:#666;letter-spacing:-0.742px;">IČO</span><span class="t" style="left:785.68px;top:659.5px;font-size:13px;line-height:15px;color:#666;letter-spacing:-0.148px;">Datum podání</span><span class="t" style="left:935.68px;top:659.5px;font-size:13px;line-height:15px;color:#666;letter-spacing:-0.159px;">Stav</span><span class="t" style="left:1085.78px;top:659.5px;font-size:13px;line-height:15px;color:#666;letter-spacing:-0.155px;">Podepsána</span><span class="t" style="left:1225.48px;top:659.5px;font-size:13px;line-height:15px;color:#666;letter-spacing:-0.019px;">Listinná podoba</span><span class="t" style="left:1365.48px;top:659.5px;font-size:13px;line-height:15px;color:#666;letter-spacing:-0.461px;width:38px;overflow:hidden;">Označená</span><div style="position:absolute;left:182.8px;top:711.8px;width:1221.3px;height:1px;background:#dcdcdc;"></div><svg style="position:absolute;left:192px;top:695.6999999999999px;" width="20" height="8" viewBox="0 0 20 8"><circle cx="4.1" cy="4" r="1.9" fill="none" stroke="#2a7ab9" stroke-width="1"/><circle cx="10" cy="4" r="1.9" fill="none" stroke="#2a7ab9" stroke-width="1"/><circle cx="15.9" cy="4" r="1.9" fill="none" stroke="#2a7ab9" stroke-width="1"/></svg><svg style="position:absolute;left:219.2px;top:690.6999999999999px;" width="18" height="18" viewBox="0 0 18 18"><circle cx="9" cy="9" r="7.6" fill="none" stroke="#2a7ab9" stroke-width="1.15"/><circle cx="8.6" cy="5.8" r="0.8" fill="#2a7ab9"/><path d="M7.8 7.7H9V11.5C9 12.1 9.5 12.35 10.3 12.2" fill="none" stroke="#2a7ab9" stroke-width="0.95" stroke-linecap="round" stroke-linejoin="round"/></svg><span class="t" style="left:255.78px;top:693px;font-size:13px;line-height:15px;color:#000;letter-spacing:0.318px;">001</span><span class="t" style="left:335.78px;top:693px;font-size:13px;line-height:15px;color:#000;letter-spacing:-0.104px;">Dodavatel - školení 2</span><span class="t" style="left:685.78px;top:693px;font-size:13px;line-height:15px;color:#000;letter-spacing:0.171px;">12345678</span><span class="t" style="left:785.68px;top:693px;font-size:13px;line-height:15px;color:#000;letter-spacing:-0.050px;">22. 5. 2025 8:41</span><span class="t" style="left:935.68px;top:693px;font-size:13px;line-height:15px;color:#000;letter-spacing:-0.135px;">Otevřena</span><svg style="position:absolute;left:1142.3px;top:693.0999999999999px;" width="12" height="12" viewBox="0 0 12 12"><path d="M2.35 2.65L9.65 9.35M9.65 2.65L2.35 9.35" stroke="#cf2128" stroke-width="2.2"/></svg><svg style="position:absolute;left:1282.5px;top:693.0999999999999px;" width="12" height="12" viewBox="0 0 12 12"><path d="M2.35 2.65L9.65 9.35M9.65 2.65L2.35 9.35" stroke="#cf2128" stroke-width="2.2"/></svg><div style="position:absolute;left:182.8px;top:736.8px;width:1221.3px;height:1px;background:#dcdcdc;"></div><svg style="position:absolute;left:192px;top:720.6999999999999px;" width="20" height="8" viewBox="0 0 20 8"><circle cx="4.1" cy="4" r="1.9" fill="none" stroke="#2a7ab9" stroke-width="1"/><circle cx="10" cy="4" r="1.9" fill="none" stroke="#2a7ab9" stroke-width="1"/><circle cx="15.9" cy="4" r="1.9" fill="none" stroke="#2a7ab9" stroke-width="1"/></svg><svg style="position:absolute;left:219.2px;top:715.6999999999999px;" width="18" height="18" viewBox="0 0 18 18"><circle cx="9" cy="9" r="7.6" fill="none" stroke="#2a7ab9" stroke-width="1.15"/><circle cx="8.6" cy="5.8" r="0.8" fill="#2a7ab9"/><path d="M7.8 7.7H9V11.5C9 12.1 9.5 12.35 10.3 12.2" fill="none" stroke="#2a7ab9" stroke-width="0.95" stroke-linecap="round" stroke-linejoin="round"/></svg><span class="t" style="left:255.78px;top:718px;font-size:13px;line-height:15px;color:#000;letter-spacing:0.318px;">002</span><span class="t" style="left:335.78px;top:718px;font-size:13px;line-height:15px;color:#000;letter-spacing:-0.104px;">Dodavatel - školení 3</span><span class="t" style="left:685.78px;top:718px;font-size:13px;line-height:15px;color:#000;letter-spacing:0.171px;">12345678</span><span class="t" style="left:785.68px;top:718px;font-size:13px;line-height:15px;color:#000;letter-spacing:-0.050px;">22. 5. 2025 8:42</span><span class="t" style="left:935.68px;top:718px;font-size:13px;line-height:15px;color:#000;letter-spacing:-0.135px;">Otevřena</span><svg style="position:absolute;left:1142.3px;top:718.0999999999999px;" width="12" height="12" viewBox="0 0 12 12"><path d="M2.35 2.65L9.65 9.35M9.65 2.65L2.35 9.35" stroke="#cf2128" stroke-width="2.2"/></svg><svg style="position:absolute;left:1282.5px;top:718.0999999999999px;" width="12" height="12" viewBox="0 0 12 12"><path d="M2.35 2.65L9.65 9.35M9.65 2.65L2.35 9.35" stroke="#cf2128" stroke-width="2.2"/></svg><div style="position:absolute;left:182.8px;top:761.8px;width:1221.3px;height:1px;background:#dcdcdc;"></div><svg style="position:absolute;left:192px;top:745.6999999999999px;" width="20" height="8" viewBox="0 0 20 8"><circle cx="4.1" cy="4" r="1.9" fill="none" stroke="#2a7ab9" stroke-width="1"/><circle cx="10" cy="4" r="1.9" fill="none" stroke="#2a7ab9" stroke-width="1"/><circle cx="15.9" cy="4" r="1.9" fill="none" stroke="#2a7ab9" stroke-width="1"/></svg><svg style="position:absolute;left:219.2px;top:740.6999999999999px;" width="18" height="18" viewBox="0 0 18 18"><circle cx="9" cy="9" r="7.6" fill="none" stroke="#2a7ab9" stroke-width="1.15"/><circle cx="8.6" cy="5.8" r="0.8" fill="#2a7ab9"/><path d="M7.8 7.7H9V11.5C9 12.1 9.5 12.35 10.3 12.2" fill="none" stroke="#2a7ab9" stroke-width="0.95" stroke-linecap="round" stroke-linejoin="round"/></svg><span class="t" style="left:255.78px;top:743px;font-size:13px;line-height:15px;color:#000;letter-spacing:0.318px;">003</span><span class="t" style="left:335.78px;top:743px;font-size:13px;line-height:15px;color:#000;letter-spacing:-0.104px;">Dodavatel - školení 5</span><span class="t" style="left:685.78px;top:743px;font-size:13px;line-height:15px;color:#000;letter-spacing:0.171px;">12345678</span><span class="t" style="left:785.68px;top:743px;font-size:13px;line-height:15px;color:#000;letter-spacing:-0.050px;">22. 5. 2025 8:43</span><span class="t" style="left:935.68px;top:743px;font-size:13px;line-height:15px;color:#000;letter-spacing:-0.135px;">Otevřena</span><svg style="position:absolute;left:1142.3px;top:743.0999999999999px;" width="12" height="12" viewBox="0 0 12 12"><path d="M2.35 2.65L9.65 9.35M9.65 2.65L2.35 9.35" stroke="#cf2128" stroke-width="2.2"/></svg><svg style="position:absolute;left:1282.5px;top:743.0999999999999px;" width="12" height="12" viewBox="0 0 12 12"><path d="M2.35 2.65L9.65 9.35M9.65 2.65L2.35 9.35" stroke="#cf2128" stroke-width="2.2"/></svg><div style="position:absolute;left:182.8px;top:762.9px;width:1221.3px;height:25px;background:#c5daf5;border-bottom:1.2px solid #93bbec;box-sizing:border-box;"></div><div style="position:absolute;left:192px;top:764px;width:21.5px;height:22px;background:rgba(40,60,90,.32);border-radius:3px;"></div><div style="position:absolute;left:190.3px;top:762.3px;width:24.4px;height:25.2px;border:1px solid #e0202a;box-sizing:border-box;"></div><svg style="position:absolute;left:192px;top:770.6999999999999px;" width="20" height="8" viewBox="0 0 20 8"><circle cx="4.1" cy="4" r="1.9" fill="none" stroke="#2a7ab9" stroke-width="1"/><circle cx="10" cy="4" r="1.9" fill="none" stroke="#2a7ab9" stroke-width="1"/><circle cx="15.9" cy="4" r="1.9" fill="none" stroke="#2a7ab9" stroke-width="1"/></svg><svg style="position:absolute;left:219.2px;top:765.6999999999999px;" width="18" height="18" viewBox="0 0 18 18"><circle cx="9" cy="9" r="7.6" fill="none" stroke="#2a7ab9" stroke-width="1.15"/><circle cx="8.6" cy="5.8" r="0.8" fill="#2a7ab9"/><path d="M7.8 7.7H9V11.5C9 12.1 9.5 12.35 10.3 12.2" fill="none" stroke="#2a7ab9" stroke-width="0.95" stroke-linecap="round" stroke-linejoin="round"/></svg><span class="t" style="left:255.78px;top:768px;font-size:13px;line-height:15px;color:#000;letter-spacing:0.318px;">004</span><span class="t" style="left:335.78px;top:768px;font-size:13px;line-height:15px;color:#000;letter-spacing:-0.104px;">Dodavatel - školení 6</span><span class="t" style="left:685.78px;top:768px;font-size:13px;line-height:15px;color:#000;letter-spacing:0.171px;">45359326</span><span class="t" style="left:785.68px;top:768px;font-size:13px;line-height:15px;color:#000;letter-spacing:-0.050px;">22. 5. 2025 8:43</span><span class="t" style="left:935.68px;top:768px;font-size:13px;line-height:15px;color:#000;letter-spacing:-0.135px;">Otevřena</span><svg style="position:absolute;left:1142.3px;top:768.0999999999999px;" width="12" height="12" viewBox="0 0 12 12"><path d="M2.35 2.65L9.65 9.35M9.65 2.65L2.35 9.35" stroke="#cf2128" stroke-width="2.2"/></svg><svg style="position:absolute;left:1282.5px;top:768.0999999999999px;" width="12" height="12" viewBox="0 0 12 12"><path d="M2.35 2.65L9.65 9.35M9.65 2.65L2.35 9.35" stroke="#cf2128" stroke-width="2.2"/></svg><div style="position:absolute;left:182.8px;top:811.8px;width:1221.3px;height:1px;background:#dcdcdc;"></div><svg style="position:absolute;left:192px;top:795.6999999999999px;" width="20" height="8" viewBox="0 0 20 8"><circle cx="4.1" cy="4" r="1.9" fill="none" stroke="#2a7ab9" stroke-width="1"/><circle cx="10" cy="4" r="1.9" fill="none" stroke="#2a7ab9" stroke-width="1"/><circle cx="15.9" cy="4" r="1.9" fill="none" stroke="#2a7ab9" stroke-width="1"/></svg><svg style="position:absolute;left:219.2px;top:790.6999999999999px;" width="18" height="18" viewBox="0 0 18 18"><circle cx="9" cy="9" r="7.6" fill="none" stroke="#2a7ab9" stroke-width="1.15"/><circle cx="8.6" cy="5.8" r="0.8" fill="#2a7ab9"/><path d="M7.8 7.7H9V11.5C9 12.1 9.5 12.35 10.3 12.2" fill="none" stroke="#2a7ab9" stroke-width="0.95" stroke-linecap="round" stroke-linejoin="round"/></svg><span class="t" style="left:255.78px;top:793px;font-size:13px;line-height:15px;color:#000;letter-spacing:0.318px;">006</span><span class="t" style="left:335.78px;top:793px;font-size:13px;line-height:15px;color:#000;letter-spacing:-0.104px;">Dodavatel - školení 6</span><span class="t" style="left:685.78px;top:793px;font-size:13px;line-height:15px;color:#000;letter-spacing:0.171px;">45359326</span><span class="t" style="left:785.68px;top:793px;font-size:13px;line-height:15px;color:#000;letter-spacing:-0.050px;">22. 5. 2025 8:44</span><span class="t" style="left:935.68px;top:793px;font-size:13px;line-height:15px;color:#000;letter-spacing:-0.128px;">Otevření zaevidováno</span><svg style="position:absolute;left:1142.3px;top:793.0999999999999px;" width="12" height="12" viewBox="0 0 12 12"><path d="M2.35 2.65L9.65 9.35M9.65 2.65L2.35 9.35" stroke="#cf2128" stroke-width="2.2"/></svg><svg style="position:absolute;left:1281.5px;top:793.0999999999999px;" width="14" height="12" viewBox="0 0 14 12"><path d="M3.3 6.1L5.9 9.3L12 2.4" fill="none" stroke="#3cb144" stroke-width="2"/></svg><div style="position:absolute;left:182.8px;top:836.8px;width:1221.3px;height:1px;background:#dcdcdc;"></div><svg style="position:absolute;left:192px;top:820.6999999999999px;" width="20" height="8" viewBox="0 0 20 8"><circle cx="4.1" cy="4" r="1.9" fill="none" stroke="#2a7ab9" stroke-width="1"/><circle cx="10" cy="4" r="1.9" fill="none" stroke="#2a7ab9" stroke-width="1"/><circle cx="15.9" cy="4" r="1.9" fill="none" stroke="#2a7ab9" stroke-width="1"/></svg><svg style="position:absolute;left:219.2px;top:815.6999999999999px;" width="18" height="18" viewBox="0 0 18 18"><circle cx="9" cy="9" r="7.6" fill="none" stroke="#2a7ab9" stroke-width="1.15"/><circle cx="8.6" cy="5.8" r="0.8" fill="#2a7ab9"/><path d="M7.8 7.7H9V11.5C9 12.1 9.5 12.35 10.3 12.2" fill="none" stroke="#2a7ab9" stroke-width="0.95" stroke-linecap="round" stroke-linejoin="round"/></svg><span class="t" style="left:255.78px;top:818px;font-size:13px;line-height:15px;color:#000;letter-spacing:0.318px;">005</span><span class="t" style="left:335.78px;top:818px;font-size:13px;line-height:15px;color:#000;letter-spacing:-0.104px;">Dodavatel - školení 7</span><span class="t" style="left:685.78px;top:818px;font-size:13px;line-height:15px;color:#000;letter-spacing:0.171px;">12345678</span><span class="t" style="left:785.68px;top:818px;font-size:13px;line-height:15px;color:#000;letter-spacing:-0.050px;">22. 5. 2025 8:44</span><span class="t" style="left:935.68px;top:818px;font-size:13px;line-height:15px;color:#000;letter-spacing:-0.135px;">Otevřena</span><svg style="position:absolute;left:1142.3px;top:818.0999999999999px;" width="12" height="12" viewBox="0 0 12 12"><path d="M2.35 2.65L9.65 9.35M9.65 2.65L2.35 9.35" stroke="#cf2128" stroke-width="2.2"/></svg><svg style="position:absolute;left:1282.5px;top:818.0999999999999px;" width="12" height="12" viewBox="0 0 12 12"><path d="M2.35 2.65L9.65 9.35M9.65 2.65L2.35 9.35" stroke="#cf2128" stroke-width="2.2"/></svg><div style="position:absolute;left:1348px;top:688px;width:56px;height:150px;background:linear-gradient(90deg,rgba(150,150,150,0),rgba(140,140,140,.16));"></div><div style="position:absolute;left:1372px;top:651px;width:32px;height:36px;background:linear-gradient(90deg,rgba(120,120,120,0),rgba(120,120,120,.22));"></div><div style="position:absolute;left:182.8px;top:838px;width:1221.3px;height:12px;background:#efefef;"></div><div style="position:absolute;left:184px;top:840.2px;width:1097px;height:7.8px;background:#c1c1c1;border-radius:4px;"></div><div style="position:absolute;left:0px;top:849px;width:1585px;height:3px;background:#f1f1f1;"></div><div style="position:absolute;left:190px;top:534px;width:257.6px;height:227.6px;background:#fff;border:1px solid #bdbdbd;border-radius:10px;box-sizing:border-box;box-shadow:0 4px 9px rgba(0,0,0,.30);"></div><span class="t" style="left:206.88px;top:552px;font-size:13px;line-height:15px;color:#a0a0a0;letter-spacing:-0.055px;">Dešifrovat</span><div style="position:absolute;left:192.2px;top:572.3px;width:253.6px;height:39.4px;border:1px solid #e0202a;box-sizing:border-box;"></div><span class="t" style="left:206.88px;top:584px;font-size:13px;line-height:15px;color:#000;font-weight:700;letter-spacing:-0.556px;">Sloučení žádostí</span><span class="t" style="left:206.88px;top:616px;font-size:13px;line-height:15px;color:#000;font-weight:700;letter-spacing:-0.555px;">Označení žádosti jako nepodaná</span><span class="t" style="left:206.88px;top:648px;font-size:13px;line-height:15px;color:#000;font-weight:700;letter-spacing:-0.490px;">Detail žádosti o účast</span><span class="t" style="left:206.88px;top:680px;font-size:13px;line-height:15px;color:#000;font-weight:700;letter-spacing:-0.548px;">Vyloučení dodavatele</span><div style="position:absolute;left:191px;top:712px;width:255.6px;height:1px;background:#dcdcdc;"></div><span class="t" style="left:206.88px;top:730px;font-size:13px;line-height:15px;color:#000;font-weight:700;letter-spacing:-0.513px;">Otevřít samostatně</span>
</body></html>
